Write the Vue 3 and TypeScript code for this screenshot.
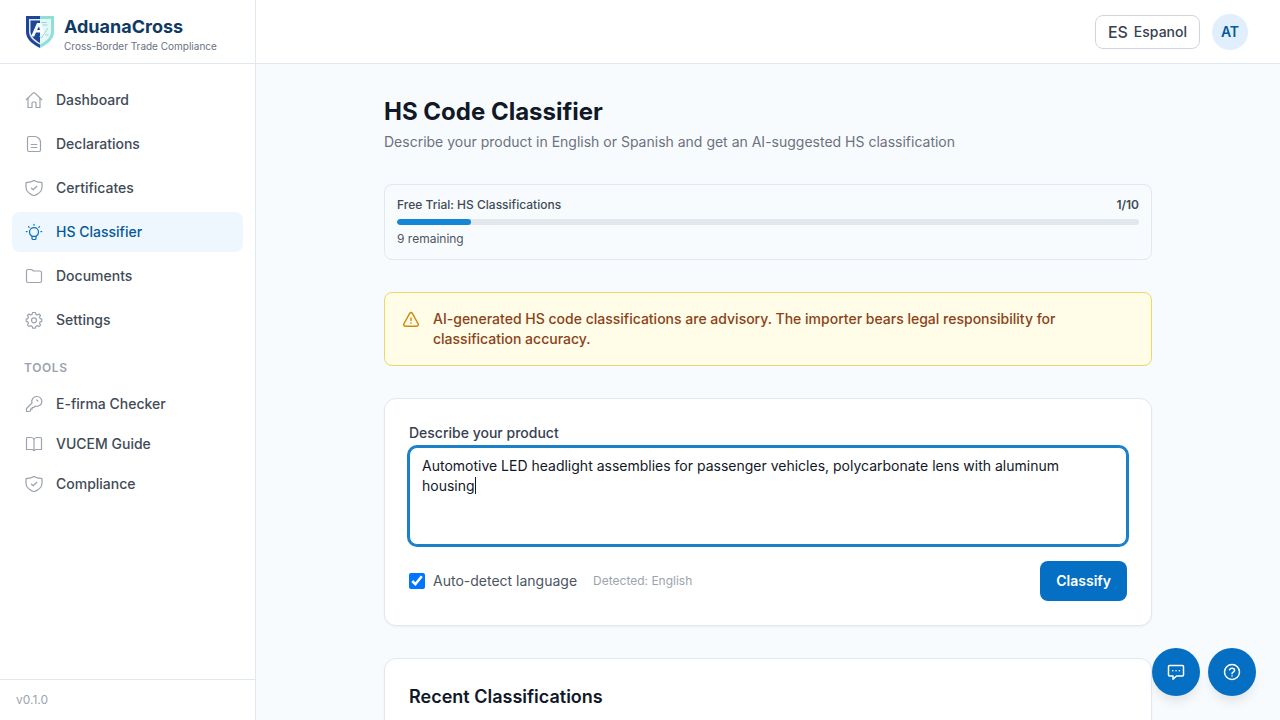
<script setup lang="ts">
import { onMounted, ref } from 'vue'

interface NavItem {
  label: string
  paths: string[]
  active?: boolean
}

const shield = [
  'M10 2.500c2 1.300 4.600 1.900 8 2.200v4.400c0 4.200-3 6.900-8 8.600-5-1.700-8-4.400-8-8.600V4.700c3.400-.3 6-.9 8-2.200z',
  'M7.500 10.200l1.700 1.600 3.600-3.500',
]

const mainItems: NavItem[] = [
  {
    label: 'Dashboard',
    paths: [
      'M2.200 9.700L9.300 2.900a1 1 0 0 1 1.400 0l7.100 6.800',
      'M4 8v9.500h4V13a1 1 0 0 1 1-1h2a1 1 0 0 1 1 1v4.500h4V8',
    ],
  },
  {
    label: 'Declarations',
    paths: [
      'M5 2.500h5.800c3 0 5.700 2.700 5.700 5.700V16a1.500 1.500 0 0 1-1.500 1.500H5A1.500 1.500 0 0 1 3.500 16V4A1.500 1.500 0 0 1 5 2.500z',
      'M7.200 10.500h5.600M7.200 13.500h5.600',
    ],
  },
  { label: 'Certificates', paths: shield },
  {
    label: 'HS Classifier',
    active: true,
    paths: [
      'M8 14.300C6.500 13.500 5.500 12 5.500 10.200a4.500 4.500 0 0 1 9 0c0 1.800-1 3.300-2.500 4.100z',
      'M8 14.300v2.200a1 1 0 0 0 1 1h2a1 1 0 0 0 1-1v-2.200',
      'M10 2.400v.8M4.500 4.700l.7.700M15.500 4.700l-.7.700M2.300 9.600h.8M16.900 9.600h.8',
    ],
  },
  {
    label: 'Documents',
    paths: [
      'M2.500 5A1.500 1.500 0 0 1 4 3.500h3.500l2 1.500H16A1.500 1.500 0 0 1 17.500 6.500V15a1.500 1.500 0 0 1-1.500 1.500H4A1.500 1.500 0 0 1 2.500 15z',
    ],
  },
  {
    label: 'Settings',
    paths: [
      'M8.600 2.500h2.800l.5 1.900 1.300.6 1.800-1 1.500 1.500-1 1.800.6 1.300 1.700.5v2.300l-1.700.5-.6 1.300 1 1.900-1.500 1.500-1.800-1-1.300.6-.5 1.900H8.600l-.5-1.900-1.300-.6-1.800 1-1.500-1.500 1-1.900-.6-1.300-1.700-.5V9.100l1.700-.5.6-1.300-1-1.800L5 4l1.800 1 1.300-.6z',
      'M12.500 10.300a2.500 2.500 0 1 1-5 0 2.500 2.500 0 0 1 5 0z',
    ],
  },
]

const toolItems: NavItem[] = [
  {
    label: 'E-firma Checker',
    paths: [
      'M12.700 2.500a4.900 4.900 0 1 1-1.400 9.500L10 13.300H8.200v1.600H6.700v1.500l-1.200 1.100H2.500v-3l5.500-5.500A4.900 4.900 0 0 1 12.700 2.500z',
      'M12.800 6l1.100 1.100',
    ],
  },
  {
    label: 'VUCEM Guide',
    paths: [
      'M10 5c-.8-1-1.800-1.500-3-1.500H3.500a1 1 0 0 0-1 1v11h5c1.200 0 2 .4 2.500 1 .5-.6 1.300-1 2.500-1h5v-11a1 1 0 0 0-1-1H13c-1.200 0-2.200.5-3 1.500z',
      'M10 5v11.500',
    ],
  },
  { label: 'Compliance', paths: shield },
]

const description = ref(
  'Automotive LED headlight assemblies for passenger vehicles, polycarbonate lens with aluminum housing',
)
const autoDetect = ref(true)
const used = ref(1)
const limit = 10
const field = ref<HTMLTextAreaElement | null>(null)

onMounted(() => {
  const el = field.value
  if (el) {
    el.focus()
    el.setSelectionRange(el.value.length, el.value.length)
  }
})
</script>

<template>
  <div class="app">
    <aside class="sidebar">
      <div class="brand">
        <svg class="logo" viewBox="0 0 32 32" aria-hidden="true">
          <path d="M2 0h14v32C8 28 2 23 2 16z" fill="#1f4596" />
          <path d="M16 0h14v16c0 7-6 12-14 16z" fill="#8fdfd8" />
          <path d="M5 3h11v25.500C9 25 5 21 5 15z" fill="#dceaf5" />
          <path d="M6.500 4.500H16V27C10 23.500 6.500 20 6.500 15z" fill="#1f4596" />
          <path d="M16 3h11v12c0 6-4 10-11 13.500z" fill="#e4f8f6" />
          <path d="M7 20.500L13 7h4l5 13.500h-3.500L17 16.500h-5l-1.800 4z" fill="#f5fbff" />
          <path d="M13 14h3L15 10.500z" fill="#1f4596" />
          <path d="M15.500 20l2 2L24 12M17 6.500h6M18.500 9h5M21 19h3.500" fill="none" stroke="#9bd5dc" stroke-width="1" />
        </svg>
        <div>
          <div class="brand-name">AduanaCross</div>
          <div class="brand-sub">Cross-Border Trade Compliance</div>
        </div>
      </div>
      <nav class="nav" aria-label="Main">
        <a v-for="item in mainItems" :key="item.label" href="#" class="nav-link" :class="{ active: item.active }">
          <svg class="icon" viewBox="0 0 20 20" aria-hidden="true"><path v-for="d in item.paths" :key="d" :d="d" /></svg>
          {{ item.label }}
        </a>
        <div class="nav-title">Tools</div>
        <a v-for="item in toolItems" :key="item.label" href="#" class="nav-link compact">
          <svg class="icon" viewBox="0 0 20 20" aria-hidden="true"><path v-for="d in item.paths" :key="d" :d="d" /></svg>
          {{ item.label }}
        </a>
      </nav>
      <div class="version">v0.1.0</div>
    </aside>

    <div class="content">
      <header class="topbar">
        <button type="button" class="lang"><span class="lang-code">ES</span>Espanol</button>
        <button type="button" class="avatar">AT</button>
      </header>
      <main class="scroll">
        <div class="page">
          <div>
            <h1>HS Code Classifier</h1>
            <p class="lead">Describe your product in English or Spanish and get an AI-suggested HS classification</p>
          </div>

          <section class="trial">
            <div class="trial-head">
              <span>Free Trial: HS Classifications</span><span class="count">{{ used }}/{{ limit }}</span>
            </div>
            <div class="track"><div class="fill" :style="{ width: (used / limit) * 100 + '%' }"></div></div>
            <div class="remaining">{{ limit - used }} remaining</div>
          </section>

          <section class="notice">
            <svg class="notice-icon" viewBox="0 0 20 20" aria-hidden="true">
              <path d="M8.700 4.300a1.500 1.500 0 0 1 2.600 0l5.900 10.700a1.500 1.500 0 0 1-1.300 2.200H4.100A1.500 1.500 0 0 1 2.800 15zM10 9v2.500M10 14.100v.1" />
            </svg>
            <p>AI-generated HS code classifications are advisory. The importer bears legal responsibility for classification accuracy.</p>
          </section>

          <form class="card" @submit.prevent>
            <label class="label" for="product">Describe your product</label>
            <div class="field">
              <textarea id="product" ref="field" v-model="description" rows="4" spellcheck="false"></textarea>
              <div class="mirror" aria-hidden="true">{{ description }}<span class="caret"></span></div>
            </div>
            <div class="actions">
              <label class="check"><input v-model="autoDetect" type="checkbox" />Auto-detect language</label>
              <span class="detected">Detected: English</span>
              <button type="submit" class="primary">Classify</button>
            </div>
          </form>

          <section class="card">
            <h2>Recent Classifications</h2>
          </section>
        </div>
      </main>
    </div>

    <div class="floating">
      <button type="button" class="fab" aria-label="Feedback">
        <svg viewBox="0 0 20 20" aria-hidden="true">
          <path d="M3.500 3.500h13a1 1 0 0 1 1 1V13a1 1 0 0 1-1 1h-6L7 17.300V14H3.500a1 1 0 0 1-1-1V4.500a1 1 0 0 1 1-1z" />
          <path d="M6.700 8.800h.1M10 8.800h.1M13.300 8.800h.1" />
        </svg>
      </button>
      <button type="button" class="fab" aria-label="Help">
        <svg viewBox="0 0 20 20" aria-hidden="true">
          <circle cx="10" cy="10" r="7.500" />
          <path d="M7.500 7.700C8 6.600 9 6.200 10 6.200c1.400 0 2.600.8 2.600 2.100 0 1.700-2.600 1.900-2.600 3.400M10 14h.1" />
        </svg>
      </button>
    </div>
  </div>
</template>

<style>
body {
  background: #f8fbfd;
}
</style>

<style scoped>
* {
  box-sizing: border-box;
}
.app {
  display: flex;
  height: 100vh;
  background: #f8fbfd;
  color: #111827;
  font-family: Inter, "Liberation Sans", sans-serif;
  font-size: 14px;
  line-height: 20px;
}
h1, h2, p {
  margin: 0;
}
button, textarea {
  font: inherit;
}
button {
  cursor: pointer;
}
.sidebar {
  display: flex;
  flex-direction: column;
  flex: 0 0 256px;
  background: #fff;
  border-right: 1px solid #e2e8f0;
}
.brand {
  display: flex;
  align-items: center;
  gap: 8px;
  height: 64px;
  padding: 0 24px;
  border-bottom: 1px solid #e2e8f0;
}
.logo {
  width: 32px;
  height: 32px;
}
.brand-name {
  font-size: 18px;
  line-height: 28px;
  font-weight: 700;
  color: #0f3a63;
}
.brand-sub {
  font-size: 10px;
  line-height: 10px;
  color: #6b7280;
  white-space: nowrap;
}
.nav {
  display: flex;
  flex-direction: column;
  gap: 4px;
  flex: 1;
  padding: 16px 12px;
}
.nav-link {
  display: flex;
  align-items: center;
  gap: 12px;
  padding: 10px 12px;
  border-radius: 8px;
  color: #414b57;
  font-weight: 500;
  text-decoration: none;
}
.nav-link.compact {
  padding: 8px 12px;
}
.nav-link.active {
  background: #eff7fe;
  color: #055a96;
}
.icon {
  width: 20px;
  height: 20px;
  fill: none;
  stroke: #9ca3af;
  stroke-width: 1.200;
  stroke-linecap: round;
  stroke-linejoin: round;
}
.active .icon {
  stroke: #0670bd;
}
.nav-title {
  padding: 16px 12px 6px;
  font-size: 12px;
  line-height: 16px;
  font-weight: 600;
  letter-spacing: 0.05em;
  text-transform: uppercase;
  color: #9ca3af;
}
.version {
  padding: 12px 16px;
  border-top: 1px solid #e2e8f0;
  font-size: 12px;
  line-height: 16px;
  color: #9ca3af;
}
.content {
  display: flex;
  flex-direction: column;
  flex: 1;
  min-width: 0;
}
.topbar {
  display: flex;
  flex: 0 0 64px;
  align-items: center;
  justify-content: flex-end;
  gap: 12px;
  padding: 0 32px;
  background: #fff;
  border-bottom: 1px solid #e2e8f0;
}
.lang {
  display: flex;
  align-items: center;
  gap: 6px;
  height: 34px;
  padding: 0 12px;
  border: 1px solid #d1d5db;
  border-radius: 8px;
  background: #fff;
  color: #374151;
  font-weight: 500;
}
.lang-code {
  font-size: 16px;
}
.avatar {
  width: 36px;
  height: 36px;
  padding: 0;
  border: 0;
  border-radius: 50%;
  background: #e0effb;
  color: #07599a;
  font-weight: 600;
}
.scroll {
  flex: 1;
  min-height: 0;
  padding: 32px;
  overflow: hidden;
}
.page {
  display: flex;
  flex-direction: column;
  gap: 32px;
  max-width: 768px;
  margin: 0 auto;
}
h1 {
  font-size: 24px;
  line-height: 32px;
  font-weight: 700;
}
.lead {
  margin-top: 4px;
  color: #6b7280;
}
.trial {
  display: flex;
  flex-direction: column;
  gap: 6px;
  padding: 12px;
  border: 1px solid #e2e8f0;
  border-radius: 8px;
  font-size: 12px;
  line-height: 16px;
  color: #414b57;
}
.trial-head {
  display: flex;
  justify-content: space-between;
  font-weight: 500;
}
.count {
  font-weight: 600;
}
.track {
  height: 6px;
  border-radius: 3px;
  background: #e2e6ed;
  overflow: hidden;
}
.fill {
  height: 100%;
  border-radius: 3px;
  background: #1585d5;
}
.remaining {
  color: #4b5563;
}
.notice {
  display: flex;
  gap: 12px;
  padding: 16px;
  border: 1px solid #ecd868;
  border-radius: 8px;
  background: #fffce8;
  color: #8a4318;
  font-weight: 500;
}
.notice-icon {
  flex: 0 0 20px;
  height: 20px;
  fill: none;
  stroke: #d08a12;
  stroke-width: 1.500;
  stroke-linecap: round;
  stroke-linejoin: round;
}
.card {
  padding: 24px;
  border: 1px solid #e2e8f0;
  border-radius: 12px;
  background: #fff;
  box-shadow: 0 1px 2px rgba(0, 0, 0, 0.05);
}
.label {
  display: block;
  margin-bottom: 4px;
  color: #374151;
  font-weight: 500;
}
.field {
  position: relative;
}
textarea {
  display: block;
  width: 100%;
  padding: 8px 12px;
  border: 1px solid #d1d5db;
  border-radius: 8px;
  background: #fff;
  color: #111827;
  caret-color: transparent;
  outline: none;
  resize: none;
}
textarea:focus {
  border-color: #1a80c8;
  box-shadow: 0 0 0 2px #1a80c8;
}
.mirror {
  position: absolute;
  inset: 0;
  padding: 8px 12px;
  border: 1px solid transparent;
  overflow: hidden;
  visibility: hidden;
  pointer-events: none;
  white-space: pre-wrap;
  overflow-wrap: break-word;
}
textarea:focus + .mirror .caret {
  visibility: visible;
}
.caret {
  display: inline-block;
  width: 1px;
  height: 17px;
  margin-right: -1px;
  background: #111827;
  vertical-align: text-bottom;
}
.actions {
  display: flex;
  align-items: center;
  gap: 16px;
  margin-top: 16px;
}
.check {
  display: flex;
  align-items: center;
  gap: 8px;
  color: #4b5563;
}
.check input {
  width: 16px;
  height: 16px;
  margin: 0;
}
.detected {
  font-size: 12px;
  line-height: 16px;
  color: #9ca3af;
}
.primary {
  margin-left: auto;
  padding: 10px 16px;
  border: 0;
  border-radius: 8px;
  background: #056fc4;
  color: #fff;
  font-weight: 600;
}
h2 {
  font-size: 18px;
  line-height: 28px;
  font-weight: 600;
}
.floating {
  position: fixed;
  right: 24px;
  bottom: 24px;
  display: flex;
  gap: 8px;
}
.fab {
  display: grid;
  place-items: center;
  width: 48px;
  height: 48px;
  padding: 0;
  border: 0;
  border-radius: 50%;
  background: #056fc4;
  box-shadow: 0 8px 12px -3px rgba(0, 0, 0, 0.1);
}
.fab svg {
  width: 20px;
  height: 20px;
  fill: none;
  stroke: #fff;
  stroke-width: 1.500;
  stroke-linecap: round;
  stroke-linejoin: round;
}
</style>
